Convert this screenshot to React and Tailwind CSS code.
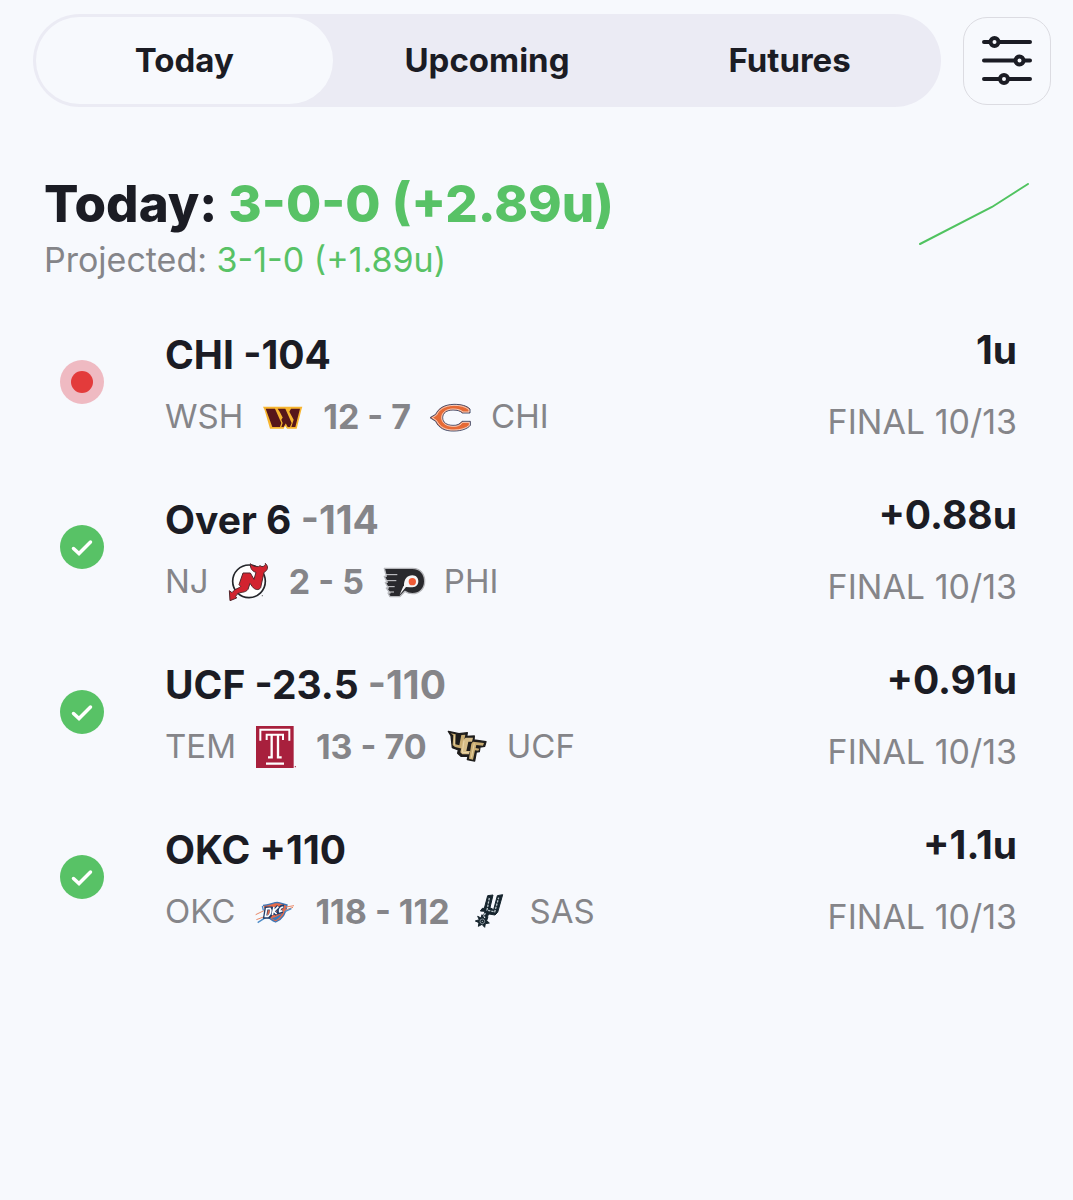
import React, { useState } from 'react';

const Commanders = () => (
    <svg viewBox="0 0 132 132" className="size-11" aria-hidden="true">
        <path d="M6 35H124L121 45L107 101H78L72 92L68 101H27L11 46Z" fill="#f7b52f" />
        <path d="M14 41H42L61 84L57 96H34Z M50 41H73L92 84L87 96H80L56 50Z M90 41H117L103 96H91L98 74L85 50Z M66 66L75 84L68 96H61L65 84L61 74Z" fill="#57161a" />
    </svg>
);

const Bears = () => (
    <svg viewBox="0 0 132 132" className="size-11" aria-hidden="true">
        <path d="M123 54V42C113 32 96 28 75 28C44 29 28 41 20 58L3 68L20 79C29 99 48 109 75 108C98 108 116 101 124 91V79H99C93 87 84 92 72 91C53 91 41 82 41 68C41 54 53 45 72 45C85 45 95 48 100 54Z" fill="#e66a35" stroke="#45506f" strokeWidth="3" />
        <path d="M120 51V44C108 34 93 31 75 31C45 32 29 45 23 60L10 68L23 77C32 96 50 106 75 105C96 105 111 100 121 91V82H101C95 91 84 95 72 94C52 94 38 84 38 68C38 52 52 42 72 42C86 42 96 45 102 51Z" fill="none" stroke="#fff" strokeWidth="2" />
    </svg>
);

const Devils = () => (
    <svg viewBox="0 0 132 132" className="size-11" aria-hidden="true">
        <circle cx="66" cy="64" r="49" fill="#fff" stroke="#24262b" strokeWidth="5" />
        <path d="M36 74L48 39H70L81 58L87 37C78 35 69 27 70 11C76 18 85 20 94 20L99 17L105 20C114 19 116 14 115 10C125 19 123 31 111 37L101 83C95 92 84 90 76 80L69 70L63 88C55 100 39 94 30 103L26 109L29 114L9 122L7 92L15 98C26 84 36 86 41 79Z" fill="#d2232f" stroke="#53272c" strokeWidth="3" strokeLinejoin="round" />
        <circle cx="106" cy="107" r="2" fill="#777" />
    </svg>
);

const Flyers = () => (
    <svg viewBox="0 0 132 132" className="size-11" aria-hidden="true">
        <path d="M7 25H91C116 25 128 43 128 64C128 86 113 101 91 101C82 101 76 99 69 94L53 110H24L18 99H24L13 84H19L10 67H16L7 49H13Z" fill="#29292d" stroke="#b7b8bc" strokeWidth="4" strokeLinejoin="round" />
        <path d="M9 44H46M13 62H43M17 80H38M22 96H36" fill="none" stroke="#d5d5d8" strokeWidth="3" />
        <path d="M66 78C65 58 76 46 91 46C103 46 109 55 109 65C108 77 98 83 84 82L72 81L53 104L64 79Z" fill="#f5f5f6" />
        <circle cx="91" cy="65" r="11" fill="#ef5b36" />
    </svg>
);

const Temple = () => (
    <svg viewBox="0 0 132 132" className="size-11" aria-hidden="true">
        <path d="M6 3H119V129H6Z" fill="#a8203d" />
        <path d="M19 47V14H106V47M38 45V29H87V45" fill="none" stroke="#fff" strokeWidth="6" />
        <path d="M53 29V97H42M72 29V97H83M36 116H90" fill="none" stroke="#fff" strokeWidth="7" />
        <circle cx="124" cy="125" r="2" fill="#a8203d" />
    </svg>
);

const Ucf = () => (
    <svg viewBox="0 0 132 132" className="size-11" aria-hidden="true">
        <path d="M10 19L42 26L67 23L65 34L88 33L87 45L123 50L119 64L105 66L103 80L94 81L89 108L67 104L69 94L48 94L38 85L40 75L22 68L18 32Z" fill="#1e1d1c" stroke="#1e1d1c" strokeWidth="4" strokeLinejoin="round" />
        <path d="M17 25L32 28L31 58L43 61L49 30L61 29L52 71L30 66L23 60L25 31Z" fill="#c9ad72" />
        <path d="M62 38H84L81 50H70L64 78H75L72 88H52L46 82L54 46Z" fill="#d6bd88" />
        <path d="M84 50L117 54L114 62L94 60L92 69L103 71L100 77L90 76L84 104L72 101L79 56Z" fill="#c9ad72" />
        <path d="M28 31L29 61M57 47L52 82L71 83M88 55L79 98" fill="none" stroke="#f3e3b9" strokeWidth="2" />
    </svg>
);

const Thunder = () => (
    <svg viewBox="0 0 132 132" className="size-11" aria-hidden="true">
        <path d="M10 66L28 58L26 44C47 44 60 34 73 34C85 35 95 42 105 42L104 47L124 48L104 58C98 79 85 92 67 100C58 96 51 92 45 85L16 99L32 83L35 72Z" fill="#f6f8fb" />
        <path d="M30 46C48 46 62 37 73 37C84 38 92 44 102 45C99 73 86 89 68 96C58 92 49 85 45 79" fill="#e56b49" stroke="#3c76b7" strokeWidth="4" />
        <path d="M8 74L35 61M10 89L37 79M99 51L123 47M95 61L120 52" fill="none" stroke="#e98968" strokeWidth="3" />
        <path d="M14 98L42 80M94 66L115 56M28 48L31 61" fill="none" stroke="#4c8cc8" strokeWidth="4" />
        <path d="M40 55L36 81H47C55 75 58 63 55 55ZM63 51L58 75M76 49L61 65L72 73M93 49C83 48 78 56 77 67L89 64" fill="none" stroke="#203c6a" strokeWidth="11" />
        <path d="M41 56L37 79H45C53 73 56 61 51 55ZM63 51L58 75M76 50L62 64L71 72M91 51C83 51 79 58 80 65L88 62" fill="none" stroke="#fff" strokeWidth="5" />
        <path d="M55 84C68 83 79 77 88 69C83 80 76 86 67 91Z" fill="#377abc" />
    </svg>
);

const Spurs = () => (
    <svg viewBox="0 0 132 132" className="size-11" aria-hidden="true">
        <path d="M59 17L75 15L66 53L77 59L88 17L104 14L89 67L81 75L63 72L55 83L47 76L51 64L37 63L43 55H49Z" fill="#15242d" stroke="#15242d" strokeWidth="3" />
        <path d="M64 24L57 60L80 66L92 23M52 69L44 86" fill="none" stroke="#b9c4ca" strokeWidth="4" strokeDasharray="7 3" />
        <path d="M42 74L48 86L60 80L56 92L64 99L52 101L50 112L42 103L31 109L33 98L22 93L34 89L29 79L39 84Z" fill="#15242d" stroke="#15242d" strokeWidth="3" />
        <circle cx="43" cy="94" r="7" fill="none" stroke="#b9c4ca" strokeWidth="2" />
        <circle cx="43" cy="94" r="2" fill="#b9c4ca" />
    </svg>
);

const tabs = ['Today', 'Upcoming', 'Futures'];

const bets = [
    { id: 1, pick: 'CHI -104', units: '1u', status: 'live', away: 'WSH', AwayLogo: Commanders, score: '12 - 7', HomeLogo: Bears, home: 'CHI' },
    { id: 2, pick: 'Over 6', odds: '-114', units: '+0.88u', status: 'won', away: 'NJ', AwayLogo: Devils, score: '2 - 5', HomeLogo: Flyers, home: 'PHI' },
    { id: 3, pick: 'UCF -23.5', odds: '-110', units: '+0.91u', status: 'won', away: 'TEM', AwayLogo: Temple, score: '13 - 70', HomeLogo: Ucf, home: 'UCF' },
    { id: 4, pick: 'OKC +110', units: '+1.1u', status: 'won', away: 'OKC', AwayLogo: Thunder, score: '118 - 112', HomeLogo: Spurs, home: 'SAS' },
];

const StatusIcon = ({ status }) => {
    if (status === 'live') {
        return (
            <span className="mb-2 flex size-11 shrink-0 items-center justify-center rounded-full bg-[#efbac2]">
                <span className="size-[22px] rounded-full bg-[#e33b3b]" />
            </span>
        );
    }
    return (
        <span className="mb-2 flex size-11 shrink-0 items-center justify-center rounded-full bg-[#58c266]">
            <svg viewBox="0 0 44 44" className="size-11" fill="none" aria-hidden="true">
                <path d="M13.5 23.5L19 28.5L30.5 17" stroke="#fff" strokeWidth="3.5" strokeLinecap="round" />
            </svg>
        </span>
    );
};

const BetRow = ({ bet }) => {
    const { AwayLogo, HomeLogo } = bet;
    return (
        <li className="flex h-[165px] items-center">
            <StatusIcon status={bet.status} />
            <div className="ml-[61px] flex-1">
                <h2 className="text-[39px] leading-12 font-bold whitespace-nowrap">
                    {bet.pick}
                    {bet.odds && <span className="text-[#858589]"> {bet.odds}</span>}
                </h2>
                <div className="mt-[14px] flex h-12 items-center gap-[18px] text-[33px] whitespace-nowrap text-[#858589]">
                    <span>{bet.away}</span>
                    <AwayLogo />
                    <span className="text-[34px] font-bold">{bet.score}</span>
                    <HomeLogo />
                    <span>{bet.home}</span>
                </div>
            </div>
            <div className="text-right whitespace-nowrap">
                <p className="text-[39px] leading-12 font-bold">{bet.units}</p>
                <p className="mt-6 text-[34px] leading-12 text-[#858589]">FINAL 10/13</p>
            </div>
        </li>
    );
};

const App = () => {
    const [activeTab, setActiveTab] = useState('Today');

    return (
        <main className="min-h-screen bg-[#f7f9fd] font-['Inter',sans-serif] text-[#1b1c24]">
            <header className="flex items-center gap-[22px] pt-[14px] pr-[22px] pl-[33px]">
                <nav className="grid h-[93px] flex-1 grid-cols-3 rounded-full bg-[#ebebf4]">
                    {tabs.map((tab) => (
                        <button
                            key={tab}
                            type="button"
                            onClick={() => setActiveTab(tab)}
                            className={`m-[3px] rounded-full text-[33px] font-bold ${activeTab === tab ? 'bg-[#f7f9fd]' : ''}`}
                        >
                            {tab}
                        </button>
                    ))}
                </nav>
                <button type="button" aria-label="Filters" className="flex size-[88px] items-center justify-center rounded-3xl border border-[#dcdce2]">
                    <svg viewBox="0 0 50 50" className="size-[50px]" fill="none" stroke="#1b1c24" strokeLinecap="round" aria-hidden="true">
                        <path d="M2 6H48M2 24.5H48M2 43H48" strokeWidth="4" />
                        <g fill="#f7f9fd" strokeWidth="4">
                            <circle cx="12.5" cy="6" r="4" />
                            <circle cx="37.5" cy="24.5" r="4" />
                            <circle cx="22" cy="43" r="4" />
                        </g>
                    </svg>
                </button>
            </header>

            <section className="mt-[66px] flex items-start justify-between pr-11 pl-11">
                <div>
                    <h1 className="text-[51px] leading-[62px] font-extrabold">
                        Today: <span className="text-[#58c266]">3-0-0 (+2.89u)</span>
                    </h1>
                    <p className="text-[34px] leading-[50px] text-[#858589]">
                        Projected: <span className="text-[#58c266]">3-1-0 (+1.89u)</span>
                    </p>
                </div>
                <svg viewBox="0 0 110 62" className="mt-[10px] h-[62px] w-[110px]" fill="none" aria-hidden="true">
                    <path d="M1 61L73 24L109 1" stroke="#50c360" strokeWidth="2" strokeLinecap="round" />
                </svg>
            </section>

            <ul className="mt-[18px] pr-14 pl-[60px]">
                {bets.map((bet) => (
                    <BetRow key={bet.id} bet={bet} />
                ))}
            </ul>
        </main>
    );
};

export default App;
